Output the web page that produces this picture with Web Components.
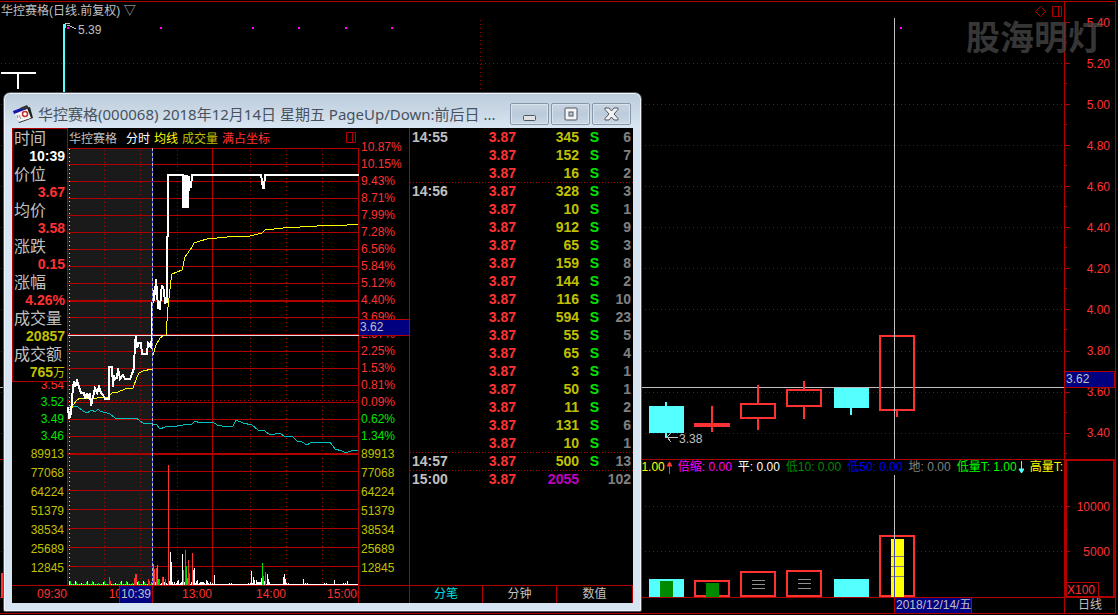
<!DOCTYPE html>
<html lang="zh-CN">
<head>
<meta charset="utf-8">
<title>华控赛格(000068)</title>
<style>
html,body{margin:0;background:#000}
body{font:12px/15px "Liberation Sans","Noto Sans CJK SC",sans-serif;color:#c0c0c0;
--line:#b00000;--red:#ff3232;--green:#00e600;--olive:#c0c000;--cyan:#54ffff;--navy:#000080}
</style>
</head>
<body>
<stock-desk></stock-desk>
<script>
const define=(name,html,setup)=>customElements.define(name,class extends HTMLElement{
  constructor(){super();this.attachShadow({mode:'open'}).innerHTML=html;}
  connectedCallback(){if(setup&&!this.ready){this.ready=true;setup(this.shadowRoot,this);}}
});
const SVG='style="display:block" shape-rendering="crispEdges"';
const priceRows=[63,104,145,186,227,268,309,351,392,433];

/* Candlestick chart: left group hangs on the left edge, right group on the right edge */
define('candle-chart',`<style>:host{display:block;min-width:0}svg{width:100%;height:441px}text{font:12px "Liberation Sans",sans-serif;fill:#c0c0c0}</style>
<svg ${SVG}>
<g transform="translate(0 -18)">
<g id="grid" stroke="#a00000" stroke-dasharray="1 3"></g>
<path d="M480.500 20V440" stroke="#a00000" stroke-dasharray="1 3"/>
<path d="M0 387.500H2000" stroke="#c0c0c0"/>
<rect x="63" y="24" width="2" height="100" fill="#54ffff"/>
<path d="M1 72h35v2H19v15h-2V74H1z" fill="#fff"/>
<path d="M65.500 28v-5M65.500 23.500h4M67 25l3 1 6 3" fill="none" stroke="#c0c0c0"/>
<text x="78" y="34">5.39</text>
<path d="M67 27h2v2h-2zM160 27h2v2h-2zM252 27h2v2h-2zM298 27h2v2h-2zM345 27h2v2h-2zM391 27h2v2h-2z" fill="#f0f"/>
</g>
<svg x="100%" overflow="visible"><g transform="translate(-1064 -18)">
<path d="M900 27h2v2h-2z" fill="#f0f"/>
<path d="M649 406h35v27h-35zM665 402h2v36h-2zM834 388h35v20h-35zM850 408h2v7h-2z" fill="#54ffff"/>
<path d="M694 423h36v4h-36zM711 406h2v26h-2z" fill="#ff3232"/>
<path d="M741 404h34v14h-34zM787 390h34v16h-34zM880 336h34v74h-34zM758 385v18M758 419v11M804 381v8M804 407v12M897 411v6" fill="none" stroke="#ff3232" stroke-width="2"/>
<path d="M894.500 18V460" stroke="#c0c0c0"/>
<path d="M666 437.500h12M671 433l-4 4 4 5" fill="none" stroke="#c0c0c0"/>
<text x="679" y="443">3.38</text>
</g></svg>
</svg>`,r=>{r.getElementById('grid').innerHTML=priceRows.map(y=>`<path d="M1 ${y}.5H4000"/>`).join('')});

define('volume-chart',`<style>:host{display:block;min-width:0}svg{width:100%;height:123px}</style>
<svg ${SVG}>
<g transform="translate(0 -475)">
<path d="M1 506.500H4000M1 551.500H4000" stroke="#a00000" stroke-dasharray="1 3"/>
<path d="M5 574H2v23h3" fill="none" stroke="#ff3232" stroke-width="2"/>
</g>
<svg x="100%" overflow="visible"><g transform="translate(-1064 -475)">
<path d="M649 579h35v18h-35zM834 579h35v18h-35z" fill="#54ffff"/>
<path d="M695 581h34v15h-34zM741 572h34v24h-34zM787 571h34v25h-34zM880 536h34v60h-34z" fill="#000" stroke="#ff3232" stroke-width="2"/>
<path d="M660 581h13v16h-13zM706 583h13v14h-13z" fill="#008a00"/>
<path d="M752 580.500h13M752 584.500h13M752 588.500h13M798 579.500h13M798 583.500h13M798 588.500h13" stroke="#909090"/>
<path d="M894.500 475V539" stroke="#c0c0c0"/>
<path d="M891 539h13v58h-13z" fill="#ff0"/>
<path d="M891 556.500h13M891 566.500h13M891 576.500h13" stroke="#808080"/>
<path d="M894.500 539v58" stroke="#4040c0"/>
</g></svg>
</svg>`);

define('price-axis',`<style>
:host{display:block;position:relative;color:var(--red);text-align:right;height:457px;overflow:hidden}
ol{list-style:none;margin:0;padding:1px 5px 0 0}li{height:41px;line-height:41px}
svg{position:absolute;left:0;top:0}
b{position:absolute;left:0;right:0;top:369px;height:15px;border:1px solid var(--line);border-left:0;background:var(--navy);color:#c0c0c0;font-weight:normal;text-align:left;padding-left:1px}
</style><svg width="5" height="457" shape-rendering="crispEdges" stroke="#b00000"></svg><ol></ol><b>3.62</b>`,r=>{
  r.querySelector('ol').innerHTML=Array.from({length:11},(_,i)=>`<li>${(5.4-i*.2).toFixed(2)}</li>`).join('');
  r.querySelector('svg').innerHTML=[22,...priceRows].map(y=>`<path d="M0 ${y-2}.5h5M0 ${y+18}.5h2"/>`).join('');
});

define('volume-axis',`<style>
:host{display:block;position:relative;box-sizing:border-box;border:1px solid var(--line);box-shadow:inset 0 0 0 1px var(--line);color:var(--red);text-align:right}
ol{list-style:none;margin:0;padding:25px 4px 0 0}li{height:45px;line-height:45px}
span{position:absolute;left:0;bottom:0;border:1px solid var(--line);border-width:1px 1px 0 0;padding:0 3px 0 1px;line-height:14px}
svg{position:absolute;left:0;top:0}
</style><svg width="5" height="130" shape-rendering="crispEdges" stroke="#b00000"><path d="M0 46.500h4M0 69.500h2M0 91.500h4"/></svg><ol><li>10000</li><li>5000</li></ol><span>X100</span>`);

define('indicator-bar',`<style>
:host{display:flex;justify-content:flex-end;gap:6px;height:15px;line-height:17px;white-space:nowrap;overflow:hidden;padding-right:1px}
span{flex:none;display:flex;align-items:center;gap:1px}
</style>
<span style="color:#ff0">1.00<svg width="6" height="13" fill="none" stroke="#ff3232"><path d="M3.500 13V1M1 5l2.500-4L6 5z" fill="#ff3232"/></svg></span>
<span style="color:#f0f">倍缩: 0.00</span><span style="color:#fff">平: 0.00</span><span style="color:#008a00">低10: 0.00</span><span style="color:#0000f0">低50: 0.00</span><span style="color:#808080">地: 0.00</span>
<span style="color:#0f0">低量T: 1.00<svg width="6" height="13" stroke="#54ffff"><path d="M3.500 0V12M1 8l2.500 4L6 8z" fill="#54ffff"/></svg></span>
<span style="color:#ff0">高量T:</span>`);

/* Intraday plot */
const bars=[];
const noise=['#00e600','#ff3232','#fff','#00e600','#ff3232'];
for(let x=69;x<152;x++){const n=(x*37+x*x*11)%17;bars.push([x,n<9?1:n<14?2:n<16?3:4,noise[(x*7+(x>>1))%5]]);}
for(let x=153;x<358;x++){const n=(x*29+x*x*7)%19,busy=x<211||x>250&&x<270;bars.push([x,busy?1+n%5:n<16?1:n%4+1,'#fff']);}
'109,8,r 110,4,r 135,11,r 136,11,r 134,7,r 148,6,r 149,4,r 151,3,g 153,21,g 154,16,r 156,17,r 157,20,g 158,6,g 159,6,r 162,8,r 163,8,g 165,6,r 168,120,r 170,33,w 171,23,w 182,31,w 183,15,g 185,35,r 186,19,g 187,7,g 188,25,r 189,12,r 192,32,r 193,15,w 194,17,w 214,10,w 251,14,w 253,8,w 256,5,w 261,7,w 262,22,g 263,9,g 265,13,r 267,11,w 268,6,w 283,8,w 284,11,w 285,6,w 303,6,w 334,5,w 347,4,w'
 .split(' ').forEach(s=>{const[x,h,c]=s.split(',');bars.push([+x,+h,{r:'#ff3232',g:'#00e600',w:'#fff'}[c]])});
define('intraday-plot',`<style>:host{display:block}</style>
<svg ${SVG} width="292" height="437" viewBox="67 148 292 437">
<path d="M68 149h84v436H68z" fill="#1a1a1a"/>
<g id="grid" stroke="#b00000"></g>
<path d="M67 301H359M67 454H359" stroke="#b00000" stroke-width="2"/>
<path d="M104.500 150V585M140.500 150V585M177.500 150V585M250.500 150V585M286.500 150V585M322.500 150V585M68 400.500H359" stroke="#b00000" stroke-dasharray="1 3"/>
<path d="M67.500 148V585M212.500 148V585M358.500 148V585" stroke="#b00000"/>
<path d="M69.500 149V585" stroke="#ff0" stroke-dasharray="1 3"/>
<path d="M67 335.500H359" stroke="#e0e0e0"/>
<g id="bars"></g>
<g fill="none">
<polyline stroke="#00c0c0" points="68,409 71,406 78,407 83,411 87,413 92,410 95,412 98,409 100,411 110,414 115,418 122,419 136,418 143,423 152,424 157,425 160,429 165,427 177,426 183,425 192,424 195,421 200,423 207,422 213,422 217,425 227,427 233,426 236,420 243,423 252,425 258,430 265,431 270,435 280,433 285,437 292,436 297,441 302,442 307,445 312,442 323,442 330,442 335,449 342,451 346,453 353,450 358,451"/>
<polyline stroke="#ff0" points="68,407 70,415 73,405 77,400 80,398 97,398 108,397 112,393 118,392 125,389 133,388 137,377 139,373 143,371 152,369 153,355 156,345 160,338 163,336 166,335 168,307 171,280 172,274 182,270 185,257 192,247 194,243 200,241 207,239 227,237 250,236 262,233 265,230 283,228 317,226 347,225 358,224"/>
<polyline stroke="#fff" stroke-width="2" points="68,407 69,419 71,413 72,400 73,387 74,381 75,387 77,381 79,387 81,393 84,393 85,399 87,393 88,399 90,393 91,406 93,397 95,388 97,393 99,387 101,393 103,395 105,399 109,399 109,367 112,367 113,387 114,375 115,379 117,378 118,368 120,379 123,375 125,379 130,379 132,374 134,368 135,342 136,336 137,348 139,343 141,343 142,354 147,354 148,343 151,347 152,335 152,303 154,300 154,292 155,293 156,279 157,292 158,308 160,309 161,293 162,285 164,290 165,303 167,302 167,237 168,236 168,175 183,175 183,207 185,207 185,176 187,176 187,207 188,207 189,176 190,187 191,187 192,175 261,175 263,188 264,188 265,175 359,175"/>
</g>
<path d="M152.500 148V585" stroke="#3030d0"/><path d="M152.500 148V585" stroke="#c0c0c0" stroke-dasharray="3 2"/>
</svg>`,r=>{
 const ys=[148,164,181,198,215,232,249,266,283,317,334,351,368,385,402,419,436,471,490,509,528,547,566];
 r.getElementById('grid').innerHTML=ys.map(y=>`<path d="M67 ${y}.5H359"/>`).join('');
 r.getElementById('bars').innerHTML=bars.map(([x,h,c])=>`<rect x="${x}" y="${585-h}" width="1" height="${h}" fill="${c}"/>`).join('');
});

/* Axis of labels: price rows 17px, volume rows 19px */
define('label-axis',`<style>
:host{display:block}ol{list-style:none;margin:0;padding:0}
.p li{line-height:17px;height:17px;color:var(--red)}.p .g{color:var(--green)}
.v li{line-height:19px;height:19px;color:var(--olive)}
</style><ol class="p"></ol><ol class="v"></ol>`,(r,h)=>{
 r.querySelector('.p').innerHTML=h.getAttribute('prices').split(' ').map(t=>t[0]==='-'?`<li class="g">${t.slice(1)}</li>`:`<li>${t}</li>`).join('');
 r.querySelector('.v').innerHTML='89913 77068 64224 51379 38534 25689 12845'.split(' ').map(t=>`<li>${t}</li>`).join('');
});

define('quote-readout',`<style>
:host{display:block;box-sizing:border-box;border:1px solid var(--line);background:#000;line-height:18px}
dl{margin:0}dt{font-size:16px;line-height:20px;height:18px;padding-left:1px;white-space:nowrap}
dd{margin:0;height:18px;text-align:right;padding-right:2px;font-weight:bold;font-size:14px;color:var(--red)}
.w{color:#fff}.y{color:var(--olive)}i{font-style:normal;font-weight:normal;font-size:12px}
</style><dl><dt>时间</dt><dd class="w">10:39</dd><dt>价位</dt><dd>3.67</dd><dt>均价</dt><dd>3.58</dd><dt>涨跌</dt><dd>0.15</dd><dt>涨幅</dt><dd>4.26%</dd><dt>成交量</dt><dd class="y">20857</dd><dt>成交额</dt><dd class="y">765<i>万</i></dd></dl>`);

define('tick-list',`<style>
:host{display:block}
table{width:100%;border-collapse:collapse;table-layout:fixed;font-size:14px;font-weight:bold}
td{padding:0;height:18px;line-height:18px;text-align:right}
td:nth-child(1){width:62px;text-align:left;padding-left:2px;box-sizing:border-box}
td:nth-child(2){width:44px;color:var(--red)}
td:nth-child(3){width:63px;color:var(--olive)}
td:nth-child(4){width:20px;color:var(--green)}
td:nth-child(5){color:#808080;padding-right:2px}
.cut{background:repeating-linear-gradient(90deg,var(--line) 0 1px,transparent 1px 3px) 0 0/100% 1px no-repeat}
.m td:nth-child(3){color:#c000c0}
</style><table><tbody></tbody></table>`,r=>{
 const d='14:55,345,6|,152,7|,16,2|14:56,328,3|,10,1|,912,9|,65,3|,159,8|,144,2|,116,10|,594,23|,55,5|,65,4|,3,1|,50,1|,11,2|,131,6|,10,1|14:57,500,13|15:00,2055,102'.split('|');
 r.querySelector('tbody').innerHTML=d.map((s,i)=>{const[t,v,n]=s.split(','),last=t==='15:00';
  return `<tr class="${t&&i?'cut':''} ${last?'m':''}"><td>${t}</td><td>3.87</td><td>${v}</td><td>${last?'':'S'}</td><td>${n}</td></tr>`}).join('');
});

define('tab-strip',`<style>
:host{display:grid;grid-template-columns:73px 74px 1fr;height:18px}
button{font:inherit;line-height:17px;color:#c0c0c0;background:#000;border:1px solid var(--line);border-left-width:0;margin:0;padding:0}
.on{color:#00e0e0}
</style><button class="on">分笔</button><button>分钟</button><button>数值</button>`);

define('intraday-view',`<style>
:host{display:grid;position:relative;grid-template-columns:55px 292px 50px 1fr;grid-template-rows:20px 437px 18px;background:#000;height:475px;overflow:hidden}
header{grid-column:2/3;grid-row:1;display:flex;align-items:center;padding:0 2px;line-height:20px}
header span:nth-child(1){margin-right:9px}header span{margin:1px 4px 0 0}
header svg{margin-left:auto}
intraday-plot{grid-column:2;grid-row:2}
.la{grid-column:1;grid-row:1/3;text-align:right;padding:249px 3px 0 0}
.ra{grid-column:3;grid-row:1/3;padding:11px 0 0 2px}
quote-readout{position:absolute;left:0;top:0;width:56px}
.tag{position:absolute;left:347px;top:191px;width:49px;height:15px;border:1px solid var(--line);border-width:1px 0;background:var(--navy);padding-left:1px}
.time{grid-column:1/4;grid-row:3;border-top:1px solid var(--line);display:grid;grid-template-columns:55px 72px 73px 74px 71px;position:relative;color:var(--red);line-height:17px;text-align:right}
.time .part{padding-right:17px}
.time b{position:absolute;left:107px;top:0;width:34px;height:17px;box-sizing:border-box;border:1px solid var(--line);border-width:0 1px;background:var(--navy);color:#c0c0c0;font-weight:normal;text-align:center}
.time::after{content:"";position:absolute;left:346px;top:0;height:17px;border-left:1px solid var(--line)}
.right{grid-column:4;grid-row:1/4;border-left:1px solid var(--line);display:flex;flex-direction:column;justify-content:space-between}
</style>
<header><span>华控赛格</span><span style="color:#fff">分时</span><span style="color:#ff0">均线</span><span style="color:var(--olive)">成交量</span><span style="color:var(--red)">满占坐标</span>
<svg width="11" height="12" fill="none" stroke="#b00000"><path d="M.500.500h9v10h-9zM6.500.500v10"/></svg></header>
<label-axis class="la" prices="3.54 -3.52 -3.49 -3.46"></label-axis>
<intraday-plot></intraday-plot>
<label-axis class="ra" prices="10.87% 10.15% 9.43% 8.71% 7.99% 7.28% 6.56% 5.84% 5.12% 4.40% 3.69% 2.97% 2.25% 1.53% 0.81% 0.09% -0.62% -1.34%"></label-axis>
<quote-readout></quote-readout>
<div class="tag">3.62</div>
<div class="time"><span>09:30</span><span class="part">10</span><span>13:00</span><span>14:00</span><span>15:00</span><b>10:39</b></div>
<div class="right"><tick-list></tick-list><tab-strip></tab-strip></div>`);

define('glass-window',`<style>
:host{display:block;box-sizing:border-box;border:1px solid #50565c;border-radius:7px 7px 2px 2px;padding:0 8px 8px;background:linear-gradient(#bccbda,#d7e4f1 34px);box-shadow:inset 0 0 0 1px #eef4fa}
.bar{display:flex;align-items:center;height:35px;gap:3px;color:#47525e}
h1{flex:1;min-width:0;margin:0;padding-top:7px;font:15px/22px "Noto Sans","Noto Sans CJK SC",sans-serif;white-space:nowrap;overflow:hidden}
.ico{margin:7px 1px 0 1px;flex:none}
.btns{display:flex;gap:2px;padding:7px 2px 0 0}
button{width:39px;height:22px;padding:0;display:grid;place-items:center;border:1px solid #8797ab;border-radius:2px;background:linear-gradient(#c6d3e1,#bccbdb 50%,#c9d7e5);box-shadow:inset 0 0 0 1px #d9e4ef}
button svg{display:block}
</style>
<div class="bar"><svg class="ico" width="21" height="19" viewBox="0 0 21 19"><path d="M4 6 17 2l3 11-14 5z" fill="#222"/><path d="M1 7 14 3l4 10L6 17z" fill="#f4f4f4"/><path d="M0 6 13 1l1 3L1 9z" fill="#1515b0"/><path d="M7 3l7-3 2 3-6 2z" fill="#333"/><circle cx="12" cy="9" r="2.500" fill="#fff" stroke="#c03030" stroke-width="1.500"/><path d="M4 10l1 3M6 10l2 4" stroke="#888"/></svg>
<h1><slot name="title"></slot></h1>
<div class="btns">
<button aria-label="最小化"><svg width="15" height="16"><rect x="1.500" y="9.500" width="12" height="5" rx="1" fill="#e2e2e2" stroke="#50545e"/></svg></button>
<button aria-label="最大化"><svg width="14" height="14"><rect x="1" y="1" width="12" height="12" rx="1" fill="#f4f4f4" stroke="#50545e"/><rect x="5" y="5" width="4" height="4" fill="#bccbdb" stroke="#50545e"/></svg></button>
<button aria-label="关闭"><svg width="15" height="14" viewBox="0 0 15 14"><path d="M1 1h4l2.500 3L10 1h4v1.500L10 7l4 4.500V13h-4l-2.500-3L5 13H1v-1.500L5 7 1 2.500z" fill="#f2f2f2" stroke="#50545e"/></svg></button>
</div></div><slot></slot>`);

define('stock-desk',`<style>
:host{display:block;position:relative;overflow:hidden;padding:1px 2px 0 0}
.frame{display:grid;grid-template-columns:1fr 50px;grid-template-rows:457px 139px auto;border:1px solid var(--line);border-left:0;background:#000}
.price{min-width:0;border-right:1px solid var(--line)}
.head{display:flex;height:16px;line-height:19px;padding-left:1px}
.head svg{margin-left:auto;overflow:visible}
.vol{min-width:0;border:1px solid var(--line);border-left:0}
.vol,volume-axis{box-sizing:border-box}
footer{grid-column:1/3;display:grid;grid-template-columns:1fr 78px 92px 51px;height:15px;line-height:15px}
footer b{font-weight:normal;background:var(--navy);border:1px solid var(--line);border-width:0 1px;box-sizing:border-box;padding-left:1px;white-space:nowrap}
footer a{color:inherit;text-decoration:none;text-align:center;grid-column:4;border-left:1px solid var(--line);box-sizing:border-box}
.mark{position:absolute;right:16px;top:15px;font:bold 34px/42px "Noto Sans CJK SC",sans-serif;color:#484848;opacity:.75}
glass-window{position:absolute;left:3px;top:92px;width:639px}
</style>
<div class="frame">
<div class="price"><div class="head">华控赛格(日线.前复权) ▽<svg width="30" height="16" fill="none" stroke="#b00000"><path d="M6.500 4.500l5 5-5 5-5-5zM18.500 4.500h9v10h-9zM24.500 4.500v10"/></svg></div><candle-chart></candle-chart></div>
<price-axis></price-axis>
<div class="vol"><indicator-bar></indicator-bar><volume-chart></volume-chart></div>
<volume-axis></volume-axis>
<footer><span></span><b>2018/12/14/五</b><a href="#">日线</a></footer>
</div>
<div class="mark">股海明灯</div>
<glass-window><span slot="title">华控赛格(000068) 2018年12月14日 星期五 PageUp/Down:前后日 ...</span><intraday-view></intraday-view></glass-window>`);
</script>
</body>
</html>
